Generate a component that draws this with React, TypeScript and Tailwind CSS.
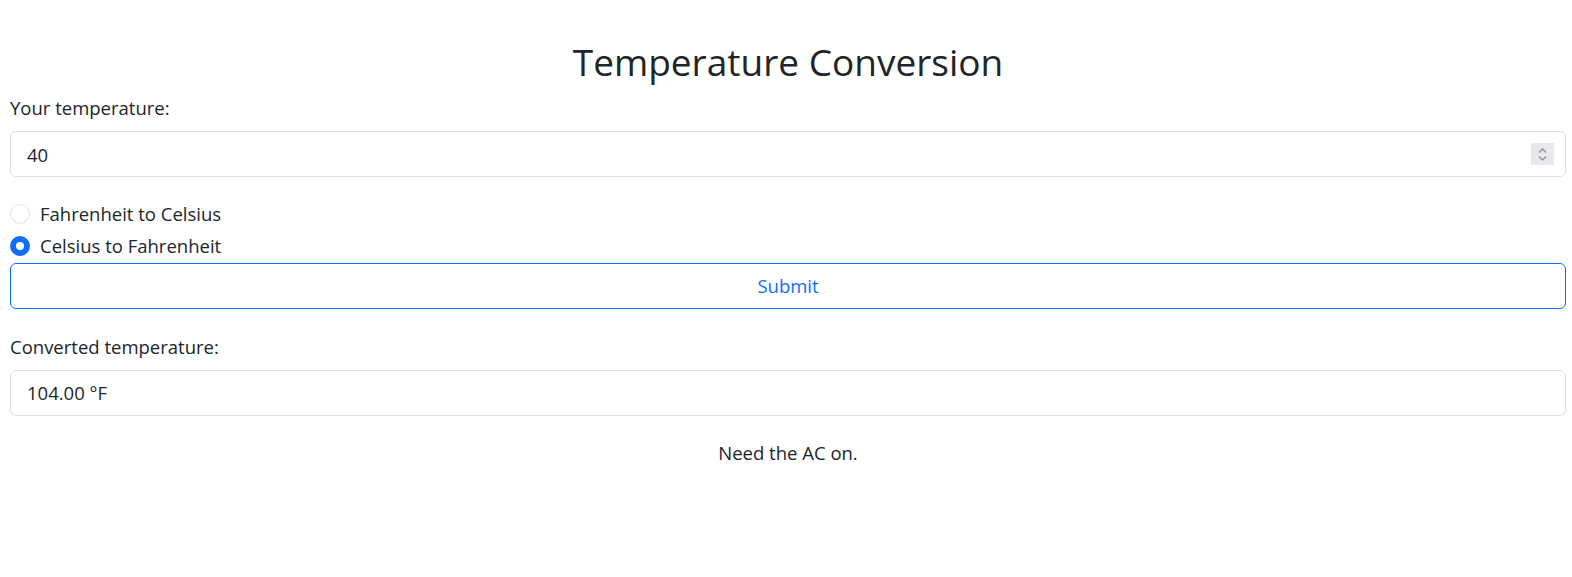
import { useState } from "react";

const App = () => {
  const [temp, setTemp] = useState("40");
  const [mode, setMode] = useState<"f2c" | "c2f">("c2f");

  return (
    <div
      className="min-h-[577px] bg-white pl-[10px] pr-[6px] text-[#212529] text-[18.5px]"
      style={{ fontFamily: '"Segoe UI", "Open Sans", "Liberation Sans", sans-serif' }}
    >
      {/* Title */}
      <h1 className="pt-[38px] text-center text-[37px] leading-[48px] font-normal">
        Temperature Conversion
      </h1>

      <label className="mt-[10px] block leading-6">Your temperature:</label>
      <div className="relative mt-[11px]">
        <input
          type="number"
          value={temp}
          onChange={(e) => setTemp(e.target.value)}
          className="block h-[46px] w-full rounded-md border border-[#dee2e6] px-4 leading-6 outline-none [appearance:textfield] [&::-webkit-inner-spin-button]:appearance-none [&::-webkit-outer-spin-button]:appearance-none"
        />
        {/* spinner (as the browser draws it) */}
        <div className="pointer-events-none absolute right-[12px] top-[12px] flex h-[22px] w-[23px] flex-col items-center justify-center gap-[3px] bg-[#e9e9ed]">
          <svg width="9" height="5" viewBox="0 0 9 5" fill="none">
            <path d="M1 4.5 4.5 1 8 4.5" stroke="#8e8e9a" strokeWidth="1.3" />
          </svg>
          <svg width="9" height="5" viewBox="0 0 9 5" fill="none">
            <path d="M1 0.5 4.5 4 8 0.5" stroke="#8e8e9a" strokeWidth="1.3" />
          </svg>
        </div>
      </div>

      {/* Radio options */}
      <div className="mt-[25px] flex flex-col gap-2">
        <label className="flex h-6 items-center gap-[10px] leading-6">
          <input
            type="radio"
            name="mode"
            checked={mode === "f2c"}
            onChange={() => setMode("f2c")}
            className="h-5 w-5 appearance-none rounded-full border border-[#dee2e6] bg-white checked:border-[#0d6efd] checked:border-[6px]"
          />
          Fahrenheit to Celsius
        </label>
        <label className="flex h-6 items-center gap-[10px] leading-6">
          <input
            type="radio"
            name="mode"
            checked={mode === "c2f"}
            onChange={() => setMode("c2f")}
            className="h-5 w-5 appearance-none rounded-full border border-[#dee2e6] bg-white checked:border-[#0d6efd] checked:border-[6px]"
          />
          Celsius to Fahrenheit
        </label>
      </div>

      <button className="mt-[5px] block h-[46px] w-full rounded-md border border-[#0d6efd] bg-white text-[#0d6efd] leading-6">
        Submit
      </button>

      <label className="mt-[26px] block leading-6">Converted temperature:</label>
      <div className="mt-[11px] flex h-[46px] w-full items-center rounded-md border border-[#dee2e6] px-4 leading-6">
        104.00 °F
      </div>

      <p className="mt-[25px] text-center leading-6">Need the AC on.</p>
    </div>
  );
};

export default App;
